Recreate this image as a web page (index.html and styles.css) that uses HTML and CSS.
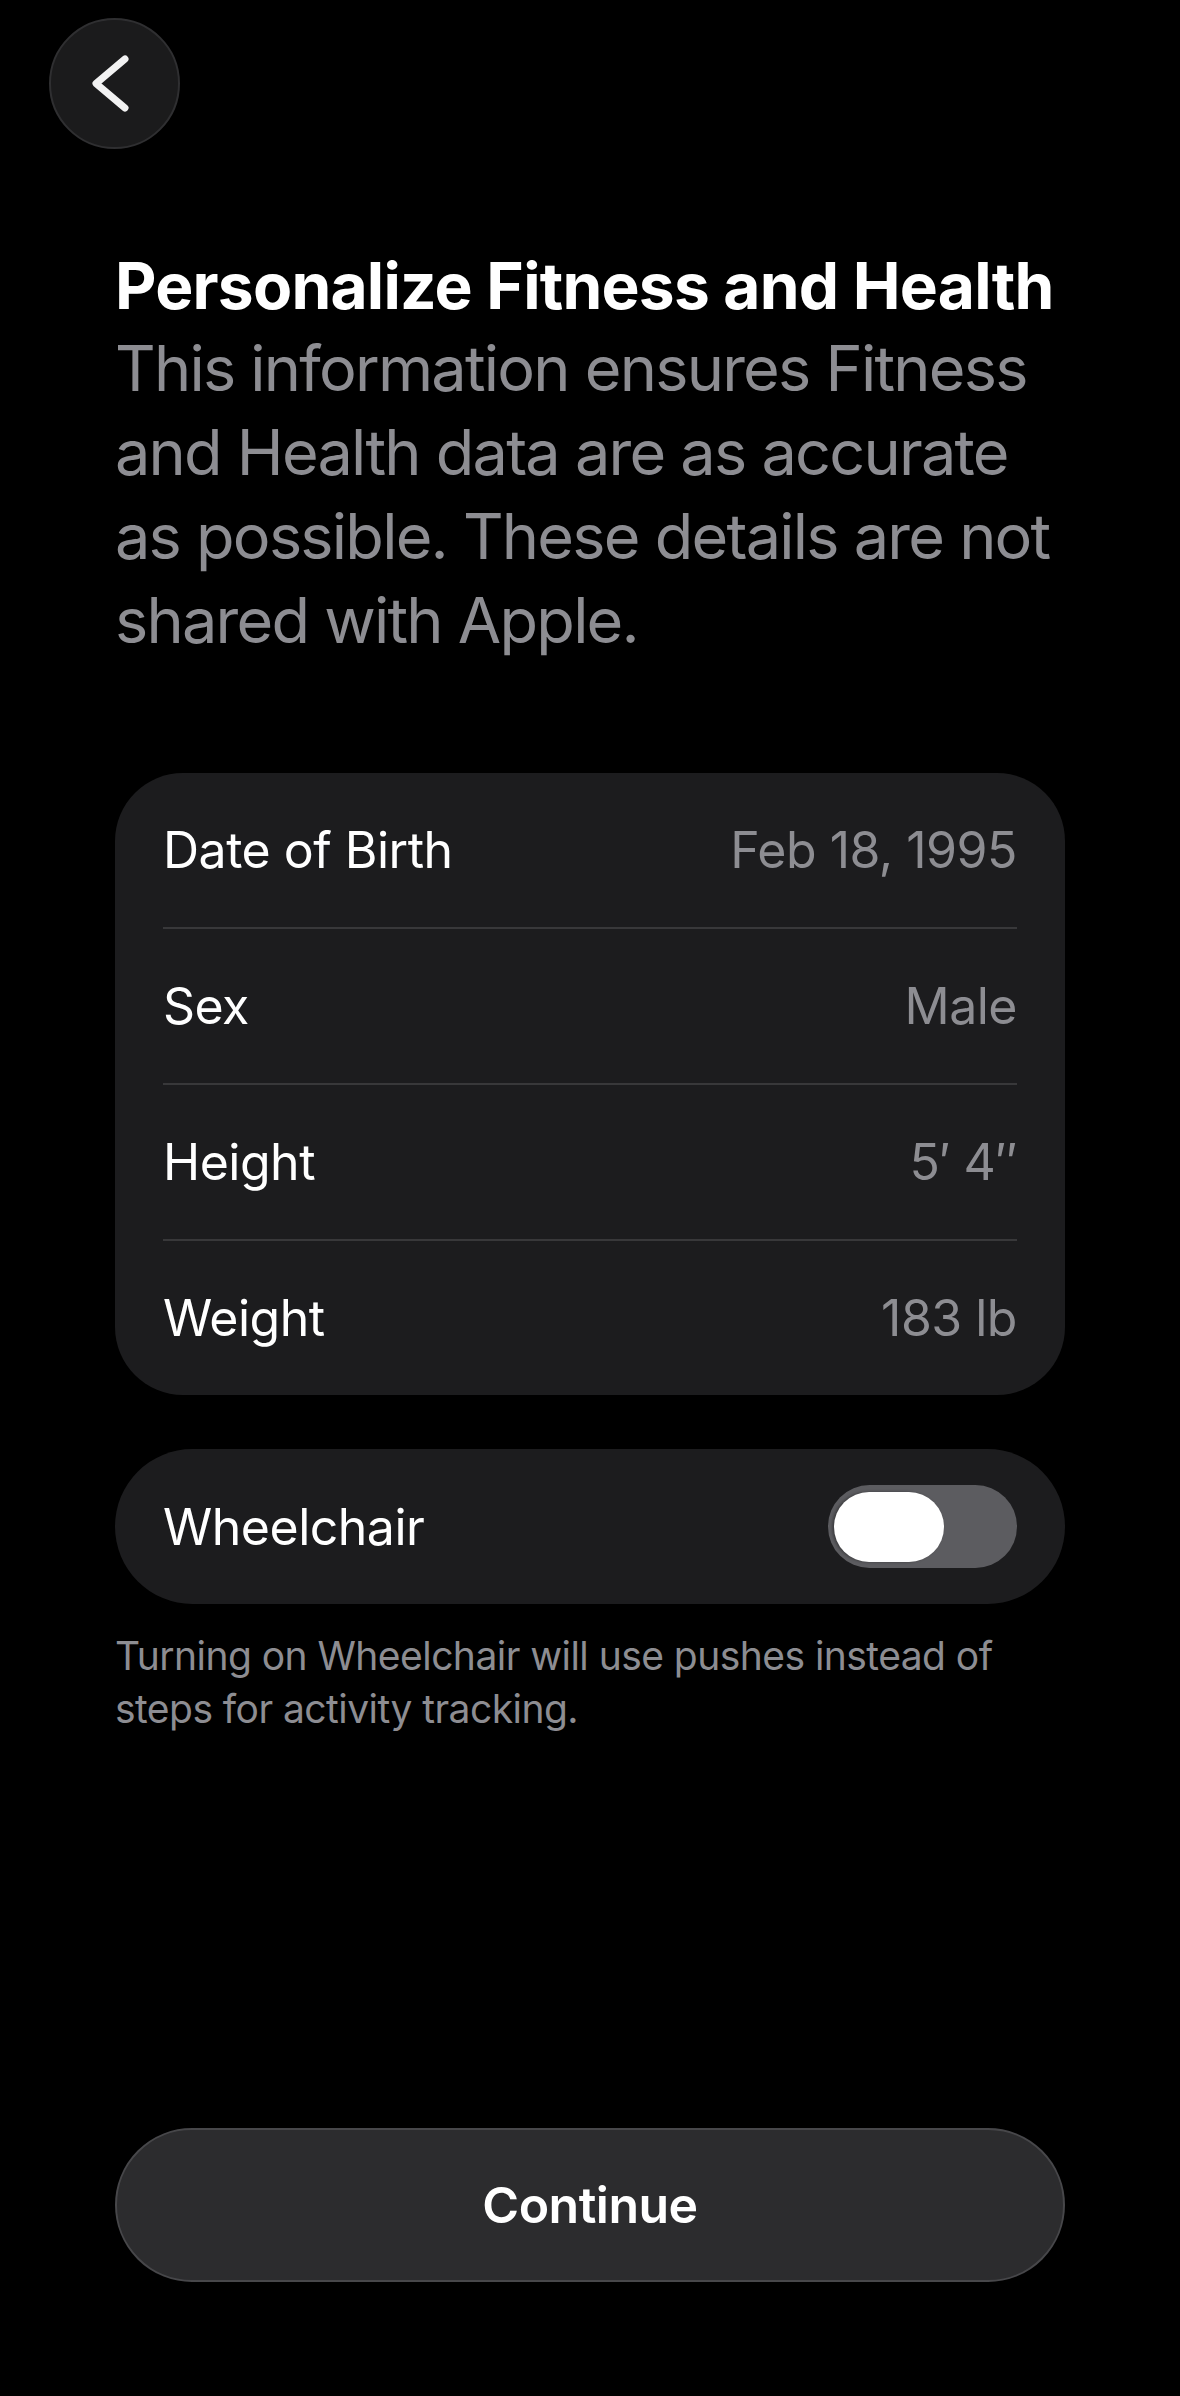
FILE: index.html
```html
<!DOCTYPE html>
<html lang="en">
<head>
<meta charset="utf-8">
<title>Personalize Fitness and Health</title>
<link rel="stylesheet" href="styles.css">
</head>
<body>
<div class="screen">
  <div class="topbar">
    <button class="back-btn" aria-label="Back">
      <svg width="131" height="131" viewBox="0 0 131 131">
        <path d="M76 41 L47 65.5 L76 90" fill="none" stroke="#f2f2f2" stroke-width="7" stroke-linecap="round" stroke-linejoin="round"/>
      </svg>
    </button>
  </div>
  <main class="content">
    <h1 class="title">Personalize Fitness and Health</h1>
    <p class="subtitle">This information ensures Fitness and Health data are as accurate as possible. These details are not shared with Apple.</p>

    <div class="card">
      <div class="row"><span class="label">Date of Birth</span><span class="value">Feb 18, 1995</span></div>
      <div class="sep"></div>
      <div class="row"><span class="label">Sex</span><span class="value">Male</span></div>
      <div class="sep"></div>
      <div class="row"><span class="label">Height</span><span class="value">5′ 4″</span></div>
      <div class="sep"></div>
      <div class="row"><span class="label">Weight</span><span class="value">183 lb</span></div>
    </div>

    <div class="toggle-card">
      <span class="label">Wheelchair</span>
      <div class="switch"><div class="knob"></div></div>
    </div>
    <p class="footnote">Turning on Wheelchair will use pushes instead of steps for activity tracking.</p>

    <div class="spacer"></div>
    <button class="continue">Continue</button>
  </main>
</div>
</body>
</html>
```
FILE: styles.css
```css
html, body {
  margin: 0;
  padding: 0;
  background: #000;
}
body {
  font-family: "Inter", "Liberation Sans", sans-serif;
  color: #fff;
}
.screen {
  min-height: 2396px;
  display: flex;
  flex-direction: column;
  box-sizing: border-box;
}
.topbar {
  padding: 18px 0 0 49px;
  height: 131px;
}
.back-btn {
  width: 131px;
  height: 131px;
  border-radius: 50%;
  background: #1b1b1c;
  border: 2px solid #2f2f31;
  padding: 0;
  margin: 0;
  box-sizing: border-box;
  display: flex;
  align-items: center;
  justify-content: center;
}
.back-btn svg {
  display: block;
  margin: -2px;
}
.content {
  flex: 1;
  display: flex;
  flex-direction: column;
  padding: 0 115px 114px;
}
.title {
  margin: 97px 0 0;
  font-size: 64px;
  line-height: 80px;
  font-weight: 700;
  letter-spacing: -0.012em;
  white-space: nowrap;
}
.subtitle {
  margin: 0;
  font-size: 63px;
  line-height: 84px;
  font-weight: 400;
  letter-spacing: -0.028em;
  color: #8d8d92;
}
.card {
  margin-top: 111px;
  background: #1c1c1e;
  border-radius: 68px;
}
.row {
  height: 154px;
  padding: 0 48px;
  display: flex;
  align-items: center;
  justify-content: space-between;
}
.sep {
  height: 2px;
  margin: 0 48px;
  background: #38383a;
}
.label {
  font-size: 50px;
  color: #fff;
  letter-spacing: -0.01em;
}
.value {
  font-size: 50px;
  color: #8d8d92;
  letter-spacing: -0.01em;
}
.toggle-card {
  margin-top: 54px;
  height: 155px;
  border-radius: 78px;
  background: #1c1c1e;
  padding: 0 48px;
  display: flex;
  align-items: center;
  justify-content: space-between;
}
.switch {
  width: 189px;
  height: 83px;
  border-radius: 42px;
  background: #5c5c60;
  display: flex;
  align-items: center;
  padding-left: 6px;
  box-sizing: border-box;
}
.knob {
  width: 110px;
  height: 70px;
  border-radius: 35px;
  background: #fff;
  box-shadow: -2px 0 3px rgba(0,0,0,0.35);
}
.footnote {
  margin: 25px 0 0;
  font-size: 39px;
  line-height: 53px;
  color: #8d8d92;
  letter-spacing: -0.014em;
}
.spacer {
  flex: 1;
}
.continue {
  height: 154px;
  border-radius: 77px;
  background: #2c2c2e;
  border: 2px solid #47474a;
  color: #fff;
  font-family: "Inter", "Liberation Sans", sans-serif;
  font-size: 50px;
  font-weight: 600;
  letter-spacing: -0.01em;
  width: 100%;
}
```
